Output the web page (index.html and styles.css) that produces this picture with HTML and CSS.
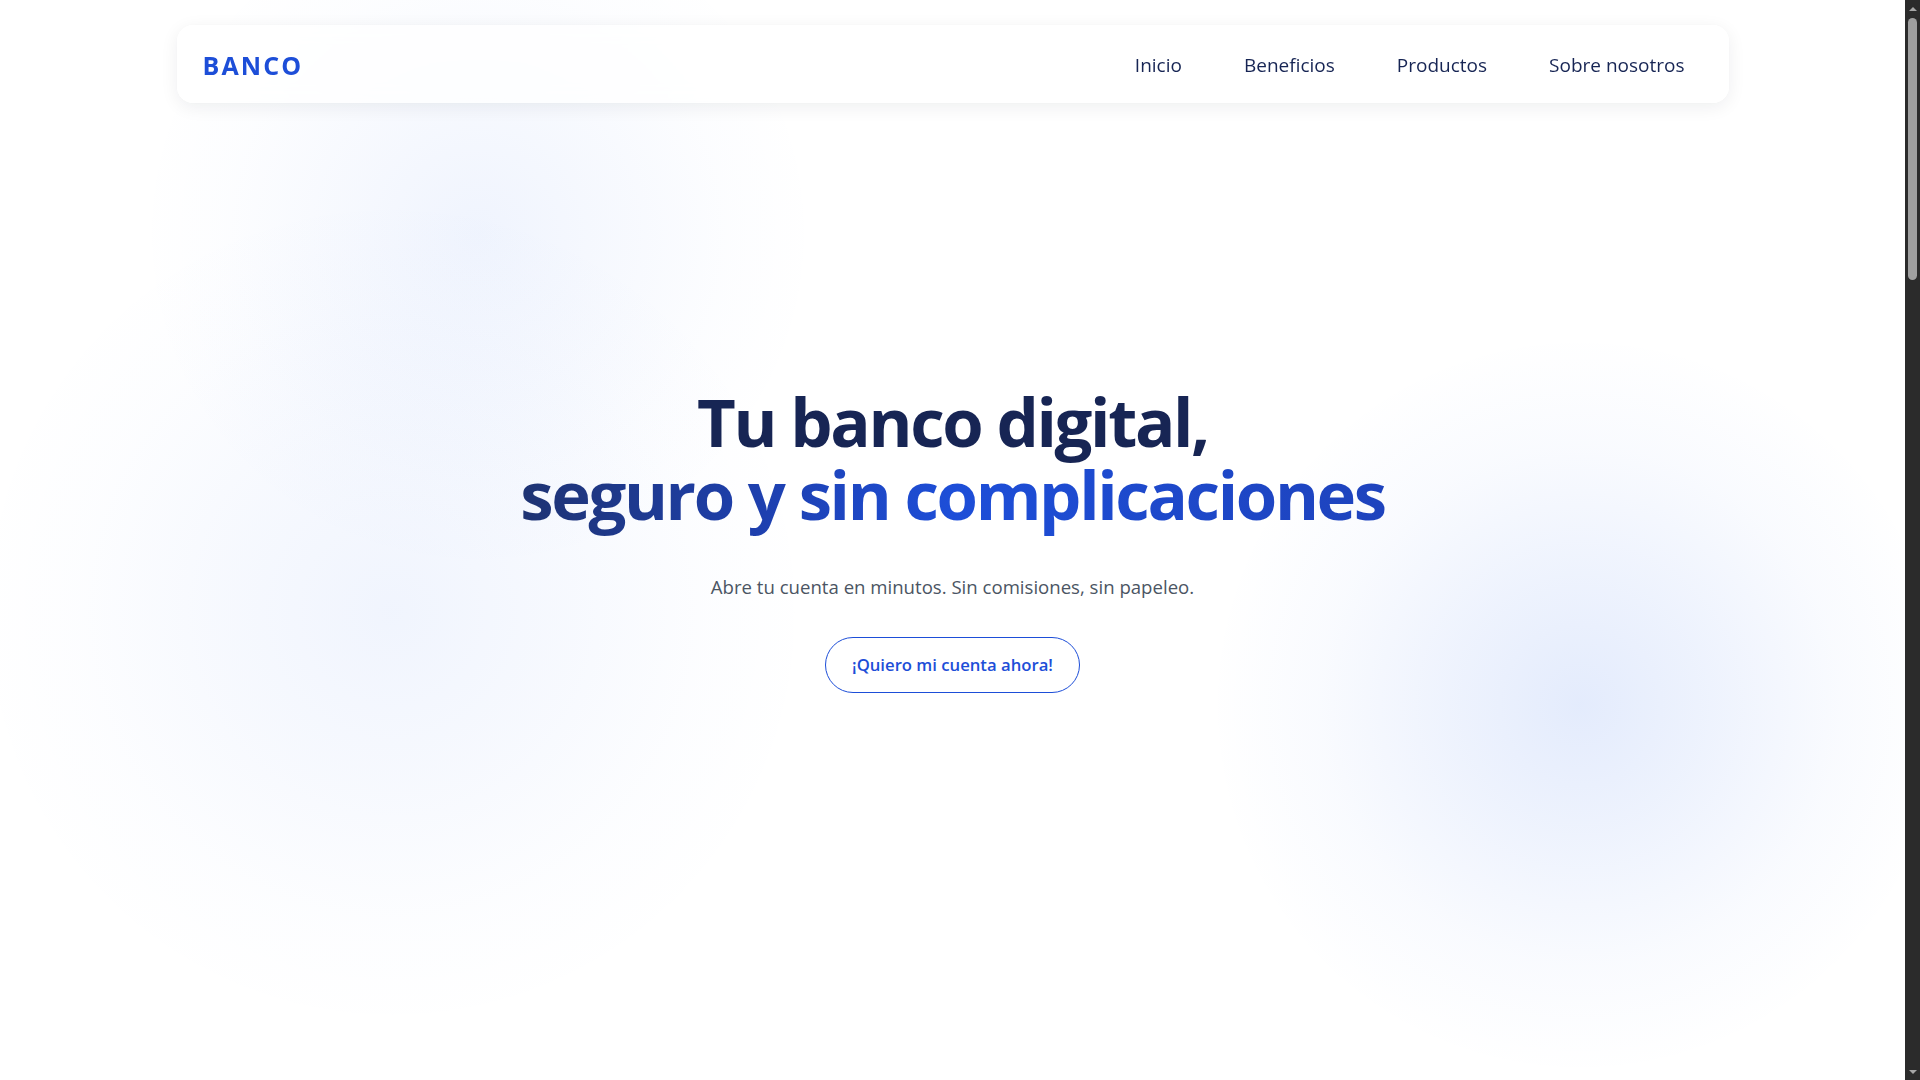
FILE: index.html
```html
<!DOCTYPE html>
<html lang="es">
<head>
<meta charset="utf-8">
<title>BANCO — Tu banco digital</title>
<link rel="stylesheet" href="styles.css">
</head>
<body>
<header class="site-header">
  <nav class="navbar">
    <a class="brand" href="#inicio">BANCO</a>
    <ul class="nav-links">
      <li><a href="#inicio">Inicio</a></li>
      <li><a href="#beneficios">Beneficios</a></li>
      <li><a href="#productos">Productos</a></li>
      <li><a href="#nosotros">Sobre nosotros</a></li>
    </ul>
  </nav>
</header>
<main>
  <section class="hero" id="inicio">
    <div class="hero-content">
      <h1 class="hero-title">Tu banco digital,<br><span class="accent">seguro y sin complicaciones</span></h1>
      <p class="hero-subtitle">Abre tu cuenta en minutos. Sin comisiones, sin papeleo.</p>
      <a class="btn-outline" href="#productos">¡Quiero mi cuenta ahora!</a>
    </div>
  </section>
</main>
<div class="fake-scrollbar" aria-hidden="true">
  <span class="sb-arrow sb-up"></span>
  <div class="sb-track"><span class="sb-thumb"></span></div>
  <span class="sb-arrow sb-down"></span>
</div>
</body>
</html>
```
FILE: styles.css
```css
* { box-sizing: border-box; }

html, body {
  margin: 0;
  padding: 0;
}

body {
  padding-right: 15px;
  font-family: "Open Sans", "Noto Sans", "Liberation Sans", sans-serif;
  background: #ffffff;
  color: #172554;
  overflow: hidden;
}

/* Simulated browser scrollbar (dark theme) */
.fake-scrollbar {
  position: fixed;
  top: 0;
  right: 0;
  width: 15px;
  height: 100vh;
  background: #2b2b2b;
  display: flex;
  flex-direction: column;
  z-index: 20;
}

.sb-arrow {
  height: 17px;
  flex: none;
  display: flex;
  align-items: center;
  justify-content: center;
}

.sb-up::before,
.sb-down::before {
  content: "";
  width: 0;
  height: 0;
  border-left: 4px solid transparent;
  border-right: 4px solid transparent;
}

.sb-up::before { border-bottom: 4px solid #a6a6a6; }
.sb-down::before { border-top: 4px solid #a6a6a6; }

.sb-track {
  flex: 1;
  padding: 1px 3px 0;
}

.sb-thumb {
  display: block;
  height: 262px;
  background: #9f9f9f;
  border-radius: 5px;
}

/* Header */
.site-header {
  position: fixed;
  top: 25px;
  left: 0;
  right: 15px;
  z-index: 10;
  padding: 0 24px;
}

.navbar {
  max-width: 1552px;
  height: 78px;
  margin: 0 auto;
  padding: 1px 25px 0 26px;
  display: flex;
  align-items: center;
  justify-content: space-between;
  background: rgba(255, 255, 255, 0.72);
  backdrop-filter: blur(8px);
  border-radius: 16px;
  box-shadow: 0 4px 18px rgba(15, 23, 42, 0.07), 0 0 2px rgba(15, 23, 42, 0.04);
}

.brand {
  font-size: 25px;
  font-weight: 700;
  letter-spacing: 2.1px;
  color: #1d4ed8;
  text-decoration: none;
}

.nav-links {
  list-style: none;
  margin: 0;
  padding: 0;
  display: flex;
  gap: 24px;
}

.nav-links a {
  display: block;
  padding: 8px 19px;
  font-size: 19px;
  color: #172554;
  text-decoration: none;
}

/* Hero */
.hero {
  min-height: 100vh;
  display: flex;
  align-items: center;
  justify-content: center;
  text-align: center;
  background:
    radial-gradient(circle 370px at 1580px 705px, rgba(37, 99, 235, 0.125) 0%, rgba(37, 99, 235, 0.08) 35%, rgba(37, 99, 235, 0.027) 70%, rgba(37, 99, 235, 0) 100%),
    radial-gradient(circle 420px at 392px 612px, rgba(37, 99, 235, 0.065) 0%, rgba(37, 99, 235, 0.04) 40%, rgba(37, 99, 235, 0.012) 75%, rgba(37, 99, 235, 0) 100%),
    radial-gradient(circle 340px at 478px 233px, rgba(37, 99, 235, 0.07) 0%, rgba(37, 99, 235, 0.04) 40%, rgba(37, 99, 235, 0.01) 75%, rgba(37, 99, 235, 0) 100%),
    #ffffff;
}

.hero-content {
  display: flex;
  flex-direction: column;
  align-items: center;
  padding-bottom: 3px;
}

.hero-title {
  margin: 0 0 41px;
  font-size: 67px;
  font-weight: 700;
  line-height: 73px;
  letter-spacing: -2.35px;
  color: #172554;
}

.accent {
  background: linear-gradient(90deg, #1e3372 0%, #1e40af 28%, #1d4ed8 50%, #1e43bd 100%);
  -webkit-background-clip: text;
  background-clip: text;
  color: transparent;
}

.hero-subtitle {
  margin: 0 0 35px;
  font-size: 18.6px;
  line-height: 30px;
  color: #4b5563;
}

.btn-outline {
  display: inline-block;
  padding: 15px 26px;
  font-size: 16.7px;
  line-height: 24px;
  font-weight: 600;
  color: #1d4ed8;
  text-decoration: none;
  border: 1px solid #1d4ed8;
  border-radius: 999px;
  background: #ffffff;
}
```
